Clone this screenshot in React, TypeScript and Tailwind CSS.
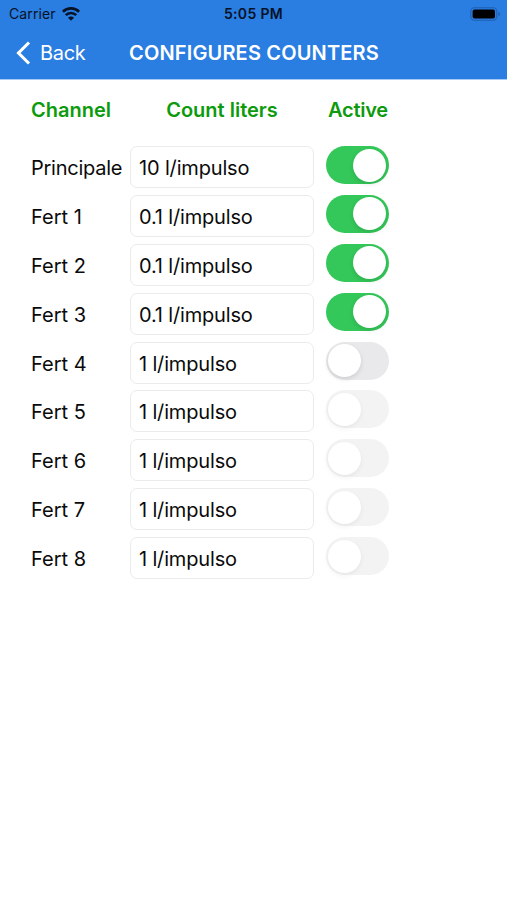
interface Counter {
  channel: string;
  liters: string;
  active: boolean;
  disabled?: boolean;
}

const counters: Counter[] = [
  { channel: "Principale", liters: "10 l/impulso", active: true },
  { channel: "Fert 1", liters: "0.1 l/impulso", active: true },
  { channel: "Fert 2", liters: "0.1 l/impulso", active: true },
  { channel: "Fert 3", liters: "0.1 l/impulso", active: true },
  { channel: "Fert 4", liters: "1 l/impulso", active: false },
  { channel: "Fert 5", liters: "1 l/impulso", active: false, disabled: true },
  { channel: "Fert 6", liters: "1 l/impulso", active: false, disabled: true },
  { channel: "Fert 7", liters: "1 l/impulso", active: false, disabled: true },
  { channel: "Fert 8", liters: "1 l/impulso", active: false, disabled: true },
];

function WifiIcon() {
  return (
    <svg width="18" height="14" viewBox="0 0 18 14" fill="none" stroke="#061226" strokeWidth="2.6">
      <path d="M0.9 4.7a11.6 11.6 0 0 1 16.2 0" />
      <path d="M3.8 8.1a7.4 7.4 0 0 1 10.4 0" />
      <path d="M9 13.8 6 10.7a4.2 4.2 0 0 1 6 0Z" fill="#061226" stroke="none" />
    </svg>
  );
}

function BatteryIcon() {
  return (
    <svg width="31" height="14" viewBox="0 0 31 14" fill="none">
      <rect x="0.8" y="0.8" width="26" height="12.4" rx="3.6" stroke="#1f5fb0" strokeWidth="1.1" />
      <rect x="2.6" y="2.4" width="22.4" height="9.2" rx="2" fill="#000" />
      <path d="M28.4 4.8v4.4c1-.4 1.6-1.2 1.6-2.2s-.6-1.8-1.6-2.2Z" fill="#1f5fb0" />
    </svg>
  );
}

function Header() {
  return (
    <header className="h-[80px] border-b border-[#a6cbf6] bg-[#2a7de1]">
      <div className="grid h-[27px] grid-cols-3 items-center pr-[6px] pl-[9px] text-[#061226]">
        <div className="flex items-center gap-[6px] text-[14px] tracking-[0.1px]">
          Carrier
          <WifiIcon />
        </div>
        <div className="pr-[3px] text-center text-[14px] font-semibold tracking-[0.35px]">5:05 PM</div>
        <div className="flex justify-end">
          <BatteryIcon />
        </div>
      </div>
      <div className="flex h-[51px] items-center text-white">
        <button
          type="button"
          className="flex w-[129px] items-center gap-[9px] pl-4 text-[20px] tracking-[-0.3px]"
        >
          <svg width="15" height="24" viewBox="0 0 15 24" fill="none" stroke="currentColor" strokeWidth="3.1">
            <path d="M13 1.5 2.5 12 13 22.5" />
          </svg>
          Back
        </button>
        <h1 className="text-[20px] font-semibold tracking-[0.16px] whitespace-nowrap">CONFIGURES COUNTERS</h1>
      </div>
    </header>
  );
}

function Switch({ active, disabled }: { active: boolean; disabled?: boolean }) {
  return (
    <button
      type="button"
      role="switch"
      aria-checked={active}
      disabled={disabled}
      className={`flex h-[38px] w-[63px] items-center rounded-full pr-[3px] pl-[2px] ${
        active ? "justify-end bg-[#34c759]" : "justify-start bg-[#e9e9eb]"
      } ${disabled ? "opacity-50" : ""}`}
    >
      <span className="size-[33px] rounded-full bg-white shadow-[0_2px_5px_rgba(0,0,0,0.12)]" />
    </button>
  );
}

export default function App() {
  return (
    <div className="min-h-screen bg-white font-['Inter','Liberation_Sans',sans-serif] text-[#0a0a0a]">
      <Header />
      <main className="pl-[31px]">
        <div className="grid h-[66px] grid-cols-[99px_184px_75px] pt-[15px] text-[20px] font-semibold text-[#0d9b0d]">
          <span>Channel</span>
          <span className="text-center">Count liters</span>
          <span className="pl-[14px] tracking-[-0.25px]">Active</span>
        </div>
        {counters.map((c) => (
          <div key={c.channel} className="flex h-[48.875px] items-start text-[20px]">
            <span
              className={`w-[99px] leading-[44px] whitespace-nowrap ${
                c.channel.length > 6 ? "tracking-[-0.25px]" : ""
              }`}
            >
              {c.channel}
            </span>
            <div className="h-[42px] w-[184px] rounded-[7px] border border-[#ebebeb] pl-2 leading-[42px] tracking-[-0.16px] whitespace-nowrap">
              {c.liters}
            </div>
            <div className="pl-[12px]">
              <Switch active={c.active} disabled={c.disabled} />
            </div>
          </div>
        ))}
      </main>
    </div>
  );
}
